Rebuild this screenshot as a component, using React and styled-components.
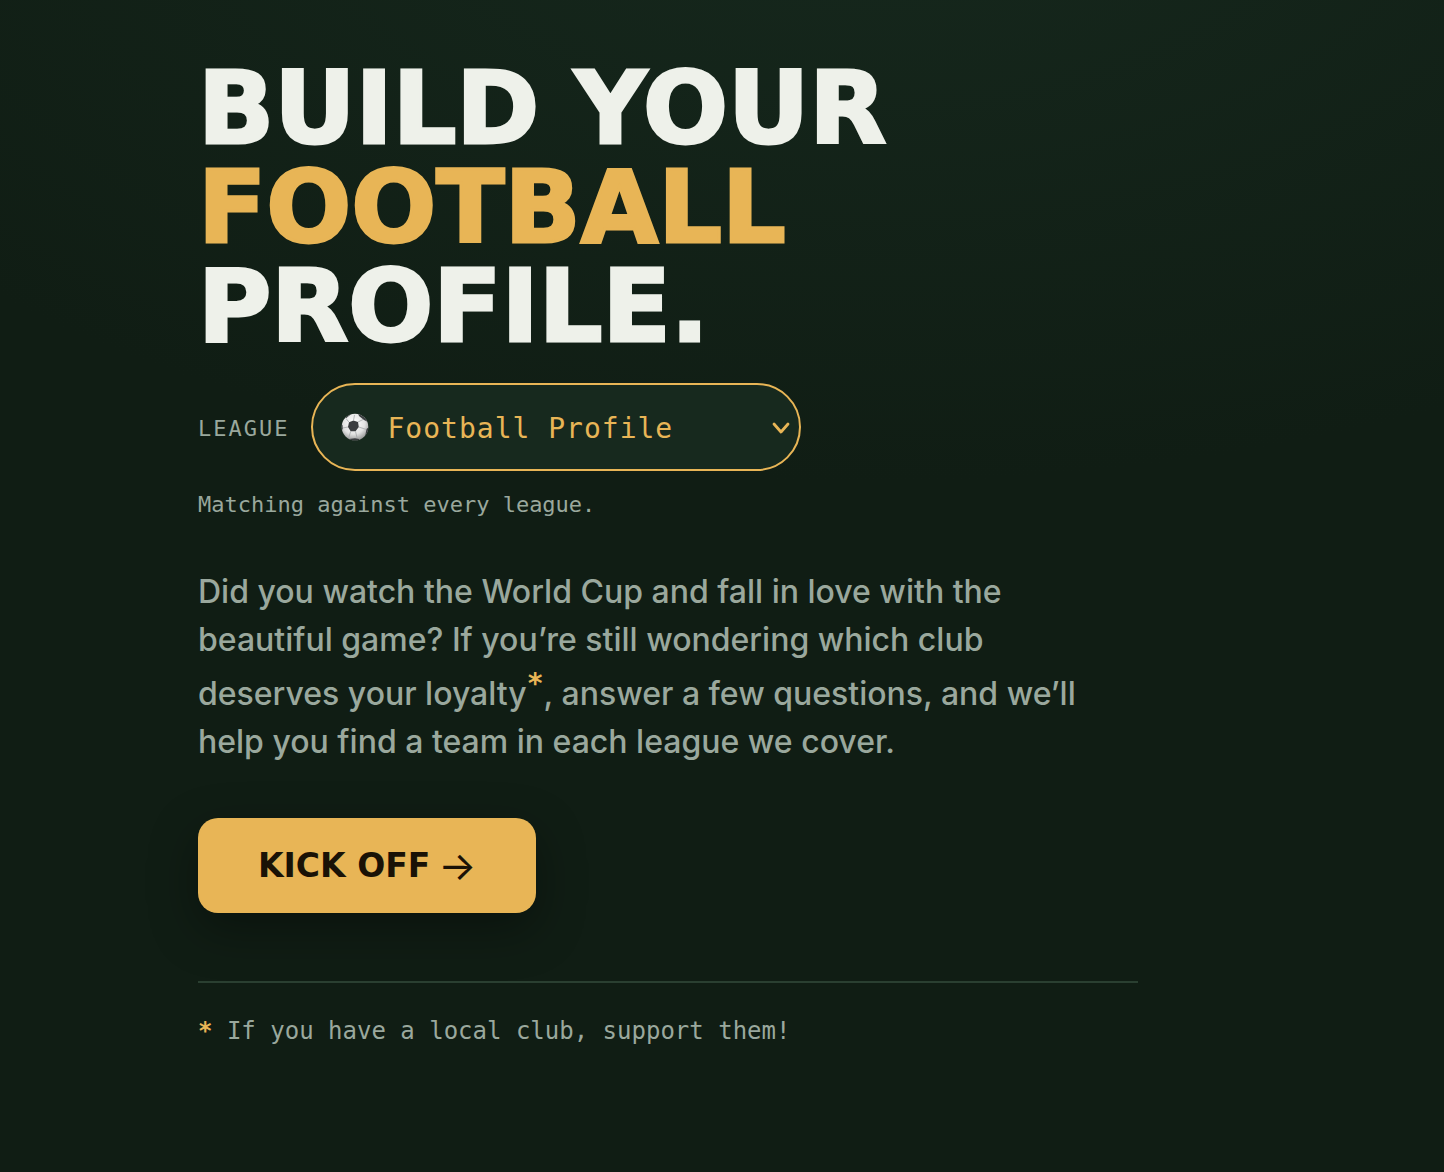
import React, { useState } from "react";
import styled, { createGlobalStyle } from "styled-components";

const GlobalStyle = createGlobalStyle`
    * {
        box-sizing: border-box;
    }
    body {
        margin: 0;
        min-height: 100vh;
        color: #eef1ea;
        font-family: "Inter", sans-serif;
        background: radial-gradient(
                ellipse 1200px 600px at 60% -10%,
                #16281d 0%,
                #101d14 100%
            )
            #101d14;
    }
`;

const MONO = `"DejaVu Sans Mono", monospace`;
const DISPLAY = `"DejaVu Sans", sans-serif`;

const Page = styled.main`
    max-width: 1138px;
    padding: 59px 0 128px 198px;
`;

const Title = styled.h1`
    margin: 0;
    font-family: ${DISPLAY};
    font-size: 100px;
    font-weight: 700;
    line-height: 99px;
    text-transform: uppercase;
    -webkit-text-stroke: 3px currentColor;
`;

const Accent = styled.span`
    display: block;
    color: #e8b556;
`;

const LeagueRow = styled.div`
    display: flex;
    align-items: center;
    gap: 22px;
    margin-top: 27px;
`;

const LeagueLabel = styled.label`
    padding-top: 2px;
    color: #9aa89d;
    font-family: ${MONO};
    font-size: 22px;
    letter-spacing: 2px;
    text-transform: uppercase;
`;

const SelectBox = styled.div`
    display: grid;
    grid-template-columns: 490px;
    align-items: center;

    > * {
        grid-area: 1 / 1;
    }
    > svg {
        pointer-events: none;
    }
`;

const Select = styled.select`
    appearance: none;
    height: 88px;
    padding: 2px 60px 0 74px;
    border: 2px solid #e8b556;
    border-radius: 44px;
    background: #17291e;
    color: #e8b556;
    font-family: ${MONO};
    font-size: 28px;
    letter-spacing: 1px;
`;

const BallIcon = styled.svg`
    width: 28px;
    height: 28px;
    margin-left: 30px;
`;

const ChevronIcon = styled.svg`
    width: 20px;
    height: 16px;
    margin-right: 10px;
    justify-self: end;
`;

const Hint = styled.p`
    margin: 18px 0 0;
    color: #9aa89d;
    font-family: ${MONO};
    font-size: 22px;
    line-height: 32px;
`;

const Intro = styled.p`
    max-width: 900px;
    margin: 47px 0 0;
    color: #9aa89d;
    font-size: 32px;
    font-weight: 500;
    line-height: 48px;
`;

const Star = styled.sup`
    color: #e8b556;
    font-family: ${MONO};
    font-size: 28px;
    font-weight: 700;
    line-height: 40px;
`;

const KickOff = styled.button`
    display: flex;
    align-items: center;
    gap: 8px;
    height: 95px;
    margin-top: 52px;
    padding: 0 60px;
    border: 0;
    border-radius: 20px;
    background: #e8b556;
    box-shadow: 0 16px 48px rgba(0, 0, 0, 0.35);
    color: #1a1206;
    font-family: ${DISPLAY};
    font-size: 33px;
    font-weight: 700;
    text-transform: uppercase;
`;

const Arrow = styled.span`
    font-family: "Inter", sans-serif;
    font-size: 40px;
    font-weight: 400;
`;

const Footnote = styled.p`
    margin: 68px 0 0;
    padding-top: 30px;
    border-top: 2px solid #2a3f31;
    color: #9aa89d;
    font-family: ${MONO};
    font-size: 24px;
    line-height: 36px;
`;

const FootnoteStar = styled.b`
    color: #e8b556;
`;

const Ball = () => (
    <BallIcon viewBox="0 0 28 28" aria-hidden="true">
        <defs>
            <radialGradient id="ball" cx="45%" cy="35%" r="65%">
                <stop offset="0%" stopColor="#ffffff" />
                <stop offset="65%" stopColor="#e2e2e2" />
                <stop offset="100%" stopColor="#9b9b9b" />
            </radialGradient>
            <clipPath id="ballEdge">
                <circle cx="14" cy="14" r="13.3" />
            </clipPath>
        </defs>
        <circle cx="14" cy="14" r="13.3" fill="url(#ball)" />
        <g clipPath="url(#ballEdge)">
            <path
                d="M8 9.200 12.500 7.500 17 9l.8 5-3.300 4.300H9.700L7 14z M17 0l6 2 4 7-4-2-5-4z M0 11l1.500 1 .3 4L0 18z M8 26l6-.8 4 .8V28H8z M25.500 16l2.500-2v7l-4 3z M4 4l5-3.500 1 .8-5 4z"
                fill="#3b3d40"
            />
            <path
                d="M8 9.200 5 5.500M17 9l5-2.500M17.800 14l7.500 2.500M14.500 18.300l1.500 6.500M9.700 18.300l-2 6.500M7 14l-5.300 1M12.500 7.500l1-5.500"
                fill="none"
                stroke="#a5a7a9"
                strokeWidth="0.8"
            />
        </g>
    </BallIcon>
);

const Chevron = () => (
    <ChevronIcon viewBox="0 0 20 16" aria-hidden="true">
        <path
            d="M3 5l7 8 7-8"
            fill="none"
            stroke="#e8b556"
            strokeWidth="2.8"
            strokeLinecap="round"
            strokeLinejoin="round"
        />
    </ChevronIcon>
);

const App = () => {
    const [league, setLeague] = useState("all");

    return (
        <>
            <GlobalStyle />
            <Page>
                <Title>
                    Build your <Accent>football</Accent> profile.
                </Title>
                <LeagueRow>
                    <LeagueLabel htmlFor="league">League</LeagueLabel>
                    <SelectBox>
                        <Select
                            id="league"
                            value={league}
                            onChange={(e) => setLeague(e.target.value)}
                        >
                            <option value="all">Football Profile</option>
                        </Select>
                        <Ball />
                        <Chevron />
                    </SelectBox>
                </LeagueRow>
                <Hint>Matching against every league.</Hint>
                <Intro>
                    Did you watch the World Cup and fall in love with the
                    beautiful game? If you’re still wondering which club
                    deserves your loyalty<Star>*</Star>, answer a few
                    questions, and we’ll help you find a team in each league we
                    cover.
                </Intro>
                <KickOff type="button">
                    Kick off <Arrow>→</Arrow>
                </KickOff>
                <Footnote>
                    <FootnoteStar>*</FootnoteStar> If you have a local club,
                    support them!
                </Footnote>
            </Page>
        </>
    );
};

export default App;
